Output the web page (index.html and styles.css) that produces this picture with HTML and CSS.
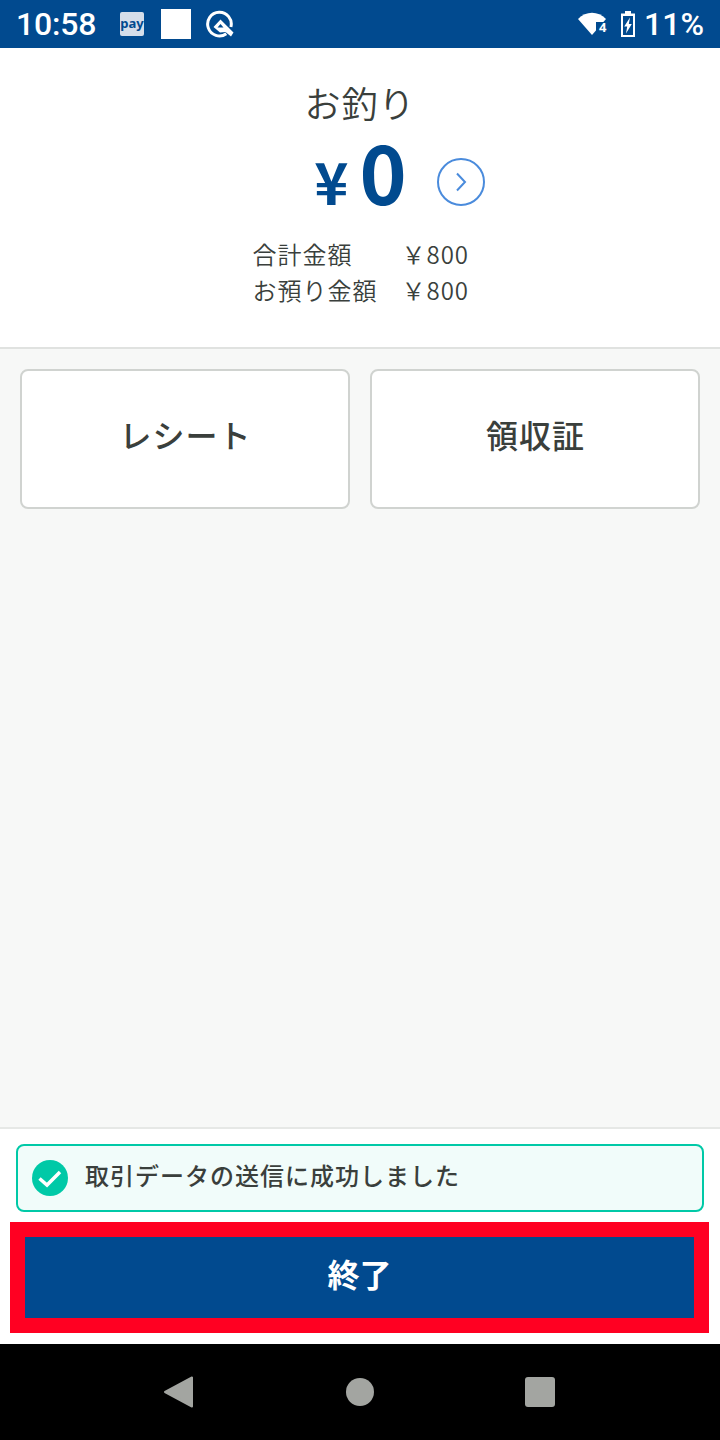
FILE: index.html
```html
<!DOCTYPE html>
<html lang="ja">
<head>
<meta charset="utf-8">
<title>お釣り</title>
<link rel="stylesheet" href="styles.css">
</head>
<body>
<div class="page">
  <header class="status">
    <span class="time">10:58</span>
    <span class="pay">pay</span>
    <span class="square"></span>
    <svg class="q" viewBox="0 0 30 30" width="30" height="30"><path d="M20.300 24.700A11.800 11.800 0 1 1 24.900 18" fill="none" stroke="#fff" stroke-width="3"/><path d="M14.500 10.500 22 18 27.500 23.500 25 27.500 19.500 23 14 23.500 7.500 18Z" fill="#fff"/><path d="M14.500 15 17.500 18.500H11.500Z" fill="#014a8f"/></svg>
    <span class="spacer"></span>
    <svg class="wifi" viewBox="0 0 30 24" width="30" height="24"><path d="M0 7C8-1.500 20-1.500 28 7L14 23Z" fill="#fff"/><rect x="18" y="10" width="12" height="14" fill="#014a8f"/><text x="21" y="20" class="wifi-n">4</text></svg>
    <svg class="batt" viewBox="0 0 16 26" width="16" height="26"><path d="M5 0H11V2.500H15V26H1V2.500H5Z" fill="#fff"/><rect x="3" y="5" width="10" height="19" fill="#014a8f"/><path d="M10 6.500 4.200 15.500H7.200L6 22.500 11.800 13H8.800Z" fill="#fff"/></svg>
    <span class="pct">11%</span>
  </header>

  <section class="summary">
    <h1 class="title">お釣り</h1>
    <div class="amount">
      <span class="yen">¥</span><span class="zero">0</span>
      <svg class="more" viewBox="0 0 48 48" width="48" height="48"><circle cx="24" cy="24" r="23" fill="none" stroke="#4a8bdc" stroke-width="2"/><path d="M20 15.500 28 24 20 32.500" fill="none" stroke="#4a8bdc" stroke-width="2"/></svg>
    </div>
    <dl class="lines">
      <dt>合計金額</dt><dd>￥800</dd>
      <dt>お預り金額</dt><dd>￥800</dd>
    </dl>
  </section>

  <main class="main">
    <button class="choice">レシート</button>
    <button class="choice">領収証</button>
  </main>

  <footer class="footer">
    <div class="notice">
      <svg class="check" viewBox="0 0 36 36" width="36" height="36"><circle cx="18" cy="18" r="18" fill="#00c9a7"/><path d="M7.500 18.500 15 25 28 12" fill="none" stroke="#fff" stroke-width="3.500"/></svg>
      <span class="notice-text">取引データの送信に成功しました</span>
    </div>
    <div class="finish-wrap"><button class="finish">終了</button></div>
  </footer>

  <nav class="nav">
    <svg viewBox="0 0 30 32" width="30" height="32"><path d="M28 1.500V30.500L1 16Z" fill="#a3a5a1" stroke="#a3a5a1" stroke-width="2" stroke-linejoin="round"/></svg>
    <span class="home"></span>
    <span class="recent"></span>
  </nav>
</div>
</body>
</html>
```
FILE: styles.css
```css
* { box-sizing: border-box; }
html, body { margin: 0; padding: 0; }
body {
  font-family: "Noto Sans CJK JP", "Noto Sans", sans-serif;
  color: #3a3f3c;
}
.page {
  width: 720px;
  height: 1440px;
  display: flex;
  flex-direction: column;
  background: #fff;
}
.status {
  height: 48px;
  background: #014a8f;
  color: #fff;
  display: flex;
  align-items: center;
  padding: 0 16px;
  font-family: Roboto, sans-serif;
  font-weight: 500;
  flex: none;
}
.time { font-size: 32px; line-height: 48px; width: 104px; letter-spacing: -0.2px; }
.pay {
  width: 24px;
  height: 24px;
  margin-right: 17px;
  background: #d5deea;
  border-radius: 2px;
  color: #014a8f;
  font: 700 13px/22px "Noto Sans", sans-serif;
  text-align: center;
}
.square { width: 30px; height: 30px; background: #fff; margin-right: 15px; }
.q { display: block; }
.spacer { flex: 1; }
.wifi { display: block; margin-right: 12px; }
.wifi-n { font: 700 13px "Noto Sans", sans-serif; fill: #fff; }
.batt { display: block; margin-right: 8px; }
.pct { font-size: 32px; line-height: 48px; }

.summary {
  height: 301px;
  flex: none;
  border-bottom: 2px solid #e0e2e0;
  padding-top: 29px;
  display: flex;
  flex-direction: column;
  align-items: center;
}
.title {
  margin: 0;
  font-size: 36px;
  font-weight: 350;
  line-height: 50px;
  letter-spacing: 1px;
}
.amount {
  display: flex;
  align-items: center;
  height: 96px;
  margin-left: 79px;
  color: #014a8f;
  font-weight: 700;
}
.yen { font-size: 58px; line-height: 80px; margin-top: 10px; margin-right: 11px; }
.zero { font-size: 80px; font-weight: 700; line-height: 80px; margin-right: 30px; margin-bottom: 11px; }
.more { display: block; margin-top: 14px; }
.lines {
  margin: 13px 0 0;
  display: grid;
  grid-template-columns: 149px auto;
  font-size: 24px;
  font-weight: 350;
  line-height: 36px;
  letter-spacing: 1px;
  width: 215px;
}
.lines dt, .lines dd { margin: 0; white-space: nowrap; }

.main {
  flex: 1;
  background: #f7f8f7;
  padding: 20px;
  display: grid;
  grid-template-columns: 1fr 1fr;
  grid-auto-rows: 140px;
  gap: 20px;
  align-content: start;
}
.choice {
  background: #fff;
  border: 2px solid #d0d3d0;
  border-radius: 8px;
  font: 500 32px "Noto Sans CJK JP", sans-serif;
  letter-spacing: 1px;
  color: #3a3f3c;
  padding: 0 0 10px 1px;
}

.footer {
  height: 217px;
  flex: none;
  border-top: 2px solid #e6e8e6;
  padding: 15px 10px 0;
  display: flex;
  flex-direction: column;
  background: #fff;
}
.notice {
  margin: 0 6px;
  height: 68px;
  border: 2px solid #00c9a7;
  border-radius: 8px;
  background: #f1fcfa;
  display: flex;
  align-items: center;
  gap: 17px;
  padding-left: 14px;
  font-size: 24px;
  font-weight: 500;
  letter-spacing: 1px;
}
.notice-text { margin-top: -8px; }
.finish-wrap {
  margin-top: 10px;
  width: 699px;
  height: 111px;
  border: 15px solid #ff0022;
  flex: none;
}
.finish {
  width: 100%;
  height: 100%;
  display: block;
  background: #014a8f;
  color: #fff;
  border: 0;
  padding: 0 0 10px;
  font: 700 32px "Noto Sans CJK JP", sans-serif;
}

.nav {
  height: 96px;
  flex: none;
  background: #000;
  display: flex;
  align-items: center;
  padding-left: 164px;
}
.nav svg { display: block; margin-right: 152px; }
.home { width: 28px; height: 28px; border-radius: 50%; background: #a3a5a1; margin-right: 151px; }
.recent { width: 30px; height: 30px; border-radius: 3px; background: #a3a5a1; }
```
